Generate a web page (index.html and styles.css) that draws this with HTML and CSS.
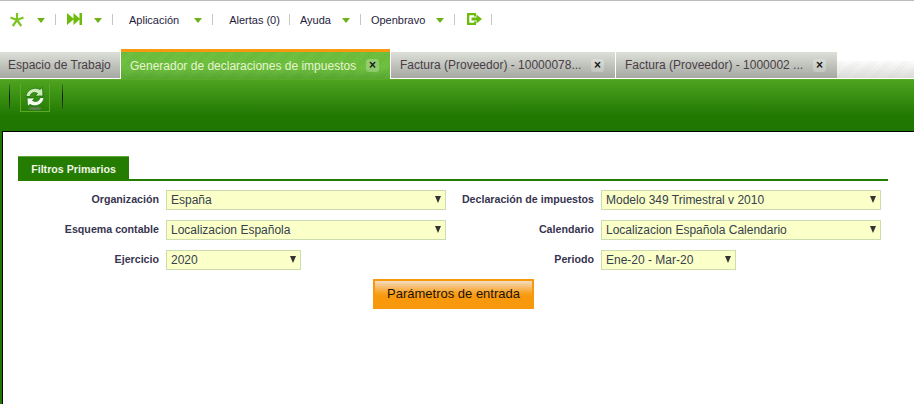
FILE: index.html
```html
<!DOCTYPE html>
<html lang="es">
<head>
<meta charset="utf-8">
<title>Generador de declaraciones de impuestos</title>
<link rel="stylesheet" href="styles.css">
</head>
<body>
<nav class="topnav">
  <svg class="icon star" viewBox="0 0 14 14"><g stroke="#7cc520" stroke-width="2.200"><path d="M7 0V7"/><path d="M0.500 4.500L7 7"/><path d="M13.500 4.500L7 7"/><path d="M2.800 13L7 7"/><path d="M11.200 13L7 7"/></g></svg>
  <i class="caret c-star"></i><i class="sep s-a"></i>
  <svg class="icon next" viewBox="0 0 15 12"><path fill="#6dbb0c" d="M0 0L7 6L0 12Z M6.500 0L12.500 5.500V0H15V12H12.500V6.500L6.500 12Z"/></svg>
  <i class="caret c-next2"></i><i class="sep s-a"></i>
  <span class="nav-text t-first">Aplicación</span><i class="caret c-app"></i><i class="sep s-a"></i>
  <span class="nav-text t-first">Alertas (0)</span><i class="sep s-b"></i>
  <span class="nav-text t-next">Ayuda</span><i class="caret c-next"></i><i class="sep s-a"></i>
  <span class="nav-text t-next">Openbravo</span><i class="caret c-next"></i><i class="sep s-a"></i>
  <svg class="icon logout" viewBox="0 0 15 12"><path fill="#6dbb0c" d="M0 0H9V3.500H7V2.200H2.300V9.800H7V8.500H9V12H0Z M4.500 4.500H9.500V1.500L15 6L9.500 10.500V7.500H4.500Z"/></svg>
  <i class="sep s-end"></i>
</nav>

<div class="tabbar">
  <div class="tab first-tab"><span>Espacio de Trabajo</span></div>
  <div class="tab active"><span>Generador de declaraciones de impuestos</span><b class="close">×</b></div>
  <div class="tab"><span>Factura (Proveedor) - 10000078...</span><b class="close">×</b></div>
  <div class="tab"><span>Factura (Proveedor) - 1000002 ...</span><b class="close">×</b></div>
  <div class="tab-fill"></div>
</div>

<div class="toolbar">
  <i class="tool-sep"></i>
  <div class="tool-btn">
    <svg viewBox="0 0 24 26" width="24" height="26">
      <ellipse cx="12" cy="23.500" rx="6.500" ry="1.600" fill="#5f7f50"/>
      <path d="M3 11.500C3.500 5 11 1 17 4.500L19.500 2.500L20 11H12L14.500 8.500C11 6.500 7.500 8 7 11.500Z" fill="#cdebb4" stroke="#15700f" stroke-width=".8"/>
      <path d="M21 12.500C20.500 19 13 23 7 19.500L4.500 21.500L4 13H12L9.500 15.500C13 17.500 16.500 16 17 12.500Z" fill="#f4fbee" stroke="#15700f" stroke-width=".8"/>
    </svg>
  </div>
  <i class="tool-sep"></i>
</div>

<main class="content">
  <div class="panel">
    <div class="section-head"><h2 class="section-tab">Filtros Primarios</h2></div>
    <form class="filters">
      <label class="flabel">Organización</label>
      <div class="select"><span>España</span><i class="arrow"></i></div>
      <label class="flabel">Declaración de impuestos</label>
      <div class="select"><span>Modelo 349 Trimestral v 2010</span><i class="arrow"></i></div>

      <label class="flabel">Esquema contable</label>
      <div class="select"><span>Localizacion Española</span><i class="arrow"></i></div>
      <label class="flabel">Calendario</label>
      <div class="select"><span>Localizacion Española Calendario</span><i class="arrow"></i></div>

      <label class="flabel">Ejercicio</label>
      <div class="select short"><span>2020</span><i class="arrow"></i></div>
      <label class="flabel">Periodo</label>
      <div class="select short"><span>Ene-20 - Mar-20</span><i class="arrow"></i></div>
    </form>
    <div class="actions"><button type="button" class="primary"><span class="primary-in">Parámetros de entrada</span></button></div>
  </div>
</main>
</body>
</html>
```
FILE: styles.css
```css
* { box-sizing: border-box; }
html, body { margin: 0; height: 100%; }
body {
  width: 914px;
  height: 404px;
  overflow: hidden;
  background: #fff;
  font-family: "Liberation Sans", Arial, sans-serif;
  display: flex;
  flex-direction: column;
}

/* top navigation */
.topnav {
  height: 49px;
  flex: none;
  border-top: 1px solid #b9bdc0;
  display: flex;
  align-items: flex-start;
  padding: 13px 0 0 10px;
}
.icon { display: block; flex: none; height: 12px; margin-top: -1px; }
.star { width: 14px; height: 14px; }
.next { width: 15px; margin-left: 11px; }
.logout { width: 15px; margin-left: 12px; }
.caret {
  display: block;
  flex: none;
  width: 0;
  height: 0;
  margin-top: 4px;
  border-left: 4px solid transparent;
  border-right: 4px solid transparent;
  border-top: 5px solid #6fb118;
}
.c-star { margin-left: 13px; }
.c-next2 { margin-left: 12px; }
.c-app { margin-left: 15px; }
.c-next { margin-left: 11px; }
.sep { display: block; flex: none; width: 1px; height: 11px; background: #c4c8c4; }
.s-a { margin-left: 10px; }
.s-b { margin-left: 9px; }
.s-end { margin-left: 9px; }
.nav-text { flex: none; width: auto; font-size: 11px; line-height: 12px; color: #1f1c3c; }
.t-first { margin-left: 16px; }
.t-next { margin-left: 10px; }

/* tabs */
.tabbar {
  height: 30px;
  flex: none;
  display: flex;
  align-items: flex-end;
}
.tab {
  height: 26px;
  flex: none;
  display: flex;
  align-items: center;
  padding: 0 11px 0 9px;
  margin-bottom: 1px;
  margin-right: 1px;
  font-size: 12px;
  color: #4a3d48;
  background: linear-gradient(#dde0d8, #a4a8a0);
}
.first-tab { padding: 0 9px 0 8px; width: 120px; margin-right: 1px; }
.tab:nth-child(3) { width: 224px; }
.tab:nth-child(4) { width: 221px; margin-right: 0; }
.tab > span { flex: 1; white-space: nowrap; }
.tab.active {
  width: 269px;
  height: 30px;
  margin-bottom: 0;
  color: #e6f4d2;
  border-top: 3px solid #f79a10;
  background: repeating-linear-gradient(135deg, rgba(0,60,0,.07) 0 1px, transparent 1px 2px), linear-gradient(#70c240 60%, #5aa934);
}
.close {
  flex: none;
  width: 13px;
  height: 13px;
  border-radius: 3px;
  background: rgba(255,255,255,.25);
  color: #1c1c1c;
  font: bold 12px/12px "Liberation Sans", sans-serif;
  text-align: center;
}
.tab-fill {
  flex: 1;
  height: 17px;
  align-self: flex-end;
  margin-bottom: 1px;
  background: repeating-linear-gradient(135deg, rgba(0,0,0,.035) 0 1px, transparent 1px 2px), linear-gradient(#fff, #dfe0dd);
}

/* green toolbar */
.toolbar {
  height: 52px;
  flex: none;
  display: flex;
  align-items: flex-start;
  padding: 3px 0 0 9px;
  background: linear-gradient(#4ea41f, #217802 70%, #1f7600);
  border-top: 1px solid #58ad24;
}
.tool-sep {
  display: block;
  width: 1px;
  height: 25px;
  margin-top: 1px;
  background: linear-gradient(#3c7a18, #111 50%, #2c5a10);
}
.tool-btn {
  width: 30px;
  height: 29px;
  margin-left: 10px;
  margin-right: 12px;
  border: 1px solid #5aa92b;
  border-top-color: transparent;
  display: flex;
  align-items: center;
  justify-content: center;
}

/* content */
.content {
  flex: 1;
  display: flex;
  min-height: 0;
  border-left: 2px solid #1f7600;
}
.panel {
  flex: 1;
  background: #fff;
  border-top: 1px solid #000;
  border-left: 1px solid #000;
  padding: 24px 26px 0 15px;
}
.section-head { border-bottom: 2px solid #247c00; }
.section-tab {
  display: block;
  width: 111px;
  height: 23px;
  margin: 0;
  background: #247c00;
  border-top: 1px solid #5da83a;
  color: #f0f6e8;
  font-size: 10.670px;
  font-weight: bold;
  line-height: 24px;
  text-align: center;
}
.filters {
  display: grid;
  grid-template-columns: 141px 280px 141px 280px;
  grid-auto-rows: 20px;
  column-gap: 7px;
  row-gap: 10px;
  margin-top: 9px;
}
.flabel {
  font-size: 10.670px;
  font-weight: bold;
  line-height: 19px;
  color: #37354f;
  text-align: right;
  white-space: nowrap;
}
.select {
  display: flex;
  align-items: center;
  justify-content: space-between;
  padding: 0 4px 1px 4px;
  background: #fbffc8;
  border: 1px solid #cbdcb0;
  font-size: 12px;
  color: #37404f;
}
.select.short { width: 135px; }
.arrow {
  display: block;
  width: 0;
  height: 0;
  border-left: 3.500px solid transparent;
  border-right: 3.500px solid transparent;
  border-top: 7px solid #333;
}
.actions { display: flex; justify-content: center; padding-left: 1px; margin-top: 9px; }
.primary {
  display: flex;
  flex-direction: column;
  width: 161px;
  height: 30px;
  padding: 2px 2px 0;
  border: 0;
  background: #f8990d;
  font-family: "Liberation Sans", Arial, sans-serif;
  font-size: 13px;
  color: #1d1206;
}
.primary-in {
  display: block;
  height: 25px;
  line-height: 25px;
  background: linear-gradient(#f3dcc0, #f8a52a 45%, #f8990d 60%);
}
```
